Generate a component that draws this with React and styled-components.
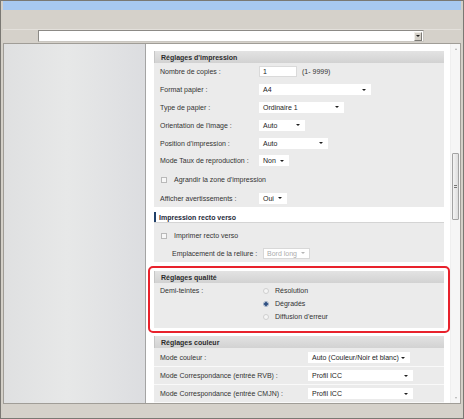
import React from "react";
import styled, { createGlobalStyle } from "styled-components";

const Global = createGlobalStyle`
  html, body { margin: 0; padding: 0; width: 464px; height: 419px; overflow: hidden; background: #d4d0c8; }
  body { font-family: "Liberation Sans", Arial, sans-serif; font-size: 7px; color: #2e2e2e; }
  * { box-sizing: border-box; }
`;

const Window = styled.div`
  width: 464px;
  height: 419px;
  display: flex;
  flex-direction: column;
  background: #d4d0c8;
  border: 1px solid #7a7873;
  padding: 0 2px;
`;

const TitleBar = styled.div`
  height: 9px;
  flex: none;
  background: #a7c8f0;
`;

const Toolbar = styled.div`
  height: 33px;
  flex: none;
  padding: 20px 37px 1px 35px;
  background: linear-gradient(to bottom, #d5d1ca 0 19px, #e3e0db 19px 20px, #d5d1ca 20px);
`;

const AddressBox = styled.div`
  height: 12px;
  background: #fff;
  border: 1px solid #8c8a86;
  border-right-color: #c9c6c0;
  border-bottom-color: #c9c6c0;
  display: flex;
  justify-content: flex-end;
  align-items: center;
  padding-right: 1px;
`;

const DropButton = styled.div`
  width: 8px;
  height: 9px;
  background: #d4d0c8;
  border: 1px solid #7c7a76;
  border-top-color: #f0eee9;
  border-left-color: #f0eee9;
  display: flex;
  align-items: center;
  justify-content: center;
`;

const Main = styled.div`
  height: 361px;
  flex: none;
  display: flex;
  border: 1px solid #a09d97;
`;

const LeftPanel = styled.div`
  width: 142px;
  flex: none;
  border-right: 1px solid #a4a4a4;
  background: linear-gradient(to right, #dfe0e1, #e7e8e8 45%, #dcdde0);
`;

const ContentArea = styled.div`
  flex: 1;
  display: flex;
  background: #fff;
  min-width: 0;
`;

const Scroll = styled.div`
  flex: 1;
  overflow: hidden;
  padding: 7px 6px 0 8px;
`;

const ScrollTrack = styled.div`
  width: 10px;
  flex: none;
  display: flex;
  flex-direction: column;
  align-items: center;
  background: #f6f6f6;
  border-left: 1px solid #efefef;
`;

const ArrowCell = styled.div`
  height: 10px;
  flex: none;
  display: flex;
  align-items: center;
  justify-content: center;
`;

const Tri = styled.span`
  width: 0;
  height: 0;
  border-left: 1.5px solid transparent;
  border-right: 1.5px solid transparent;
  ${p => (p.$up ? "border-bottom" : "border-top")}: 2px solid #b0b0b0;
`;

const Thumb = styled.div`
  width: 7px;
  height: 67px;
  margin-top: 99px;
  border: 1px solid #a3a3a3;
  border-radius: 1px;
  background: linear-gradient(to right, #f4f4f4, #dedede);
  display: flex;
  align-items: center;
  justify-content: center;
`;

const Grip = styled.span`
  width: 3px;
  height: 4px;
  background: repeating-linear-gradient(to bottom, #777 0 1px, #e8e8e8 1px 2px);
`;

const Spacer = styled.div`
  flex: 1;
`;

const BottomBar = styled.div`
  height: 14px;
  flex: none;
  background: #d5d1ca;
`;

const SectionHeader = styled.div`
  height: 12px;
  display: flex;
  align-items: center;
  padding-left: 6px;
  font-weight: bold;
  color: #2c2c2c;
  background: linear-gradient(to bottom, #e3e3e3, #d2d2d2);
  border-left: 1px solid #c6c6c6;
  margin-top: ${p => p.$mt || 0}px;
`;

const SectionBody = styled.div`
  background: #ebebeb;
  padding: ${p => p.$pad};
`;

const Row = styled.div`
  display: flex;
  align-items: center;
  height: ${p => p.$h || 17.8}px;
  padding-left: 6px;
  border-top: ${p => (p.$divided ? "1px solid #f9f9f9" : "none")};
`;

const Label = styled.span`
  width: ${p => p.$w}px;
  flex: none;
  padding-left: ${p => p.$indent || 0}px;
  white-space: nowrap;
  color: #333;
  align-self: ${p => (p.$top ? "flex-start" : "center")};
  line-height: ${p => (p.$top ? "13px" : "normal")};
`;

const TextInput = styled.div`
  width: ${p => p.$w}px;
  height: 11px;
  background: #fff;
  border: 1px solid #dadada;
  padding-left: 3px;
  display: flex;
  align-items: center;
  color: #222;
`;

const Hint = styled.span`
  margin-left: 5px;
  color: #333;
`;

const Select = styled.div`
  width: ${p => p.$w}px;
  height: 11px;
  display: flex;
  align-items: center;
  justify-content: space-between;
  padding: 0 4px 0 3px;
  background: #fff;
  border: 1px solid ${p => (p.$disabled ? "#d8d8d8" : "#fff")};
  color: ${p => (p.$disabled ? "#acacac" : "#222")};
  white-space: nowrap;
`;

const Caret = styled.span`
  width: 0;
  height: 0;
  border-left: 2px solid transparent;
  border-right: 2px solid transparent;
  border-top: 2.5px solid ${p => (p.$disabled ? "#b5b5b5" : "#1e1e1e")};
`;

const CheckLine = styled.label`
  display: flex;
  align-items: center;
  gap: 7px;
  padding-left: 1px;
  color: #333;
`;

const CheckBox = styled.span`
  width: 6px;
  height: 6px;
  border: 1px solid #b9b9b9;
  background: #f7f7f7;
`;

const SubHeader = styled.div`
  margin-top: 5px;
  height: 11px;
  border-bottom: 1px solid #d4d4d4;
  display: flex;
  align-items: stretch;
`;

const SubTitle = styled.span`
  border-left: 2px solid #203f69;
  padding-left: 3px;
  font-weight: bold;
  color: #1f2a3a;
  display: flex;
  align-items: center;
`;

const Highlight = styled.div`
  margin: 4px -6px 3px;
  border: 2px solid #e8222c;
  border-radius: 5px;
  padding: 3px 4px;
`;

const RadioGroup = styled.div`
  display: flex;
  flex-direction: column;
`;

const RadioLine = styled.div`
  height: 13px;
  display: flex;
  align-items: center;
  gap: 6px;
  color: #333;
`;

const Radio = styled.span`
  width: 6px;
  height: 6px;
  border-radius: 50%;
  border: 1px solid ${p => (p.$checked ? "#9aaac0" : "#cfcfcf")};
  background: ${p =>
    p.$checked
      ? "radial-gradient(circle, #2f5082 0 1.6px, #dfe5ee 2.1px)"
      : "#f5f5f5"};
`;

function Sel({ w, children, disabled }) {
  return (
    <Select $w={w} $disabled={disabled}>
      <span>{children}</span>
      <Caret $disabled={disabled} />
    </Select>
  );
}

export default function App() {
  return (
    <>
      <Global />
      <Window>
        <TitleBar />
        <Toolbar>
          <AddressBox>
            <DropButton>
              <Caret />
            </DropButton>
          </AddressBox>
        </Toolbar>
        <Main>
          <LeftPanel />
          <ContentArea>
            <Scroll>
              <SectionHeader>Réglages d'impression</SectionHeader>
              <SectionBody $pad="0">
                <Row>
                  <Label $w={99}>Nombre de copies :</Label>
                  <TextInput $w={38}>1</TextInput>
                  <Hint>(1- 9999)</Hint>
                </Row>
                <Row>
                  <Label $w={99}>Format papier :</Label>
                  <Sel w={112}>A4</Sel>
                </Row>
                <Row>
                  <Label $w={99}>Type de papier :</Label>
                  <Sel w={85}>Ordinaire 1</Sel>
                </Row>
                <Row>
                  <Label $w={99}>Orientation de l'image :</Label>
                  <Sel w={46}>Auto</Sel>
                </Row>
                <Row>
                  <Label $w={99}>Position d'impression :</Label>
                  <Sel w={69}>Auto</Sel>
                </Row>
                <Row>
                  <Label $w={99}>Mode Taux de reproduction :</Label>
                  <Sel w={30}>Non</Sel>
                </Row>
                <Row $h={19.5}>
                  <CheckLine>
                    <CheckBox />
                    Agrandir la zone d'impression
                  </CheckLine>
                </Row>
                <Row>
                  <Label $w={99}>Afficher avertissements :</Label>
                  <Sel w={28}>Oui</Sel>
                </Row>
              </SectionBody>

              <SubHeader>
                <SubTitle>Impression recto verso</SubTitle>
              </SubHeader>
              <SectionBody $pad="4px 0 0">
                <Row $h={17.5}>
                  <CheckLine>
                    <CheckBox />
                    Imprimer recto verso
                  </CheckLine>
                </Row>
                <Row $h={17.5}>
                  <Label $w={103} $indent={12}>Emplacement de la reliure :</Label>
                  <Sel w={47} disabled>Bord long</Sel>
                </Row>
              </SectionBody>

              <Highlight>
                <SectionHeader>Réglages qualité</SectionHeader>
                <SectionBody $pad="1px 0 5px">
                  <Row $h={39}>
                    <Label $w={103} $top>Demi-teintes :</Label>
                    <RadioGroup>
                      <RadioLine>
                        <Radio />
                        Résolution
                      </RadioLine>
                      <RadioLine>
                        <Radio $checked />
                        Dégradés
                      </RadioLine>
                      <RadioLine>
                        <Radio />
                        Diffusion d'erreur
                      </RadioLine>
                    </RadioGroup>
                  </Row>
                </SectionBody>
              </Highlight>

              <SectionHeader>Réglages couleur</SectionHeader>
              <SectionBody $pad="1px 0 0">
                <Row $h={17}>
                  <Label $w={148}>Mode couleur :</Label>
                  <Sel w={102}>Auto (Couleur/Noir et blanc)</Sel>
                </Row>
                <Row $h={18} $divided>
                  <Label $w={148}>Mode Correspondance (entrée RVB) :</Label>
                  <Sel w={105}>Profil ICC</Sel>
                </Row>
                <Row $h={18} $divided>
                  <Label $w={148}>Mode Correspondance (entrée CMJN) :</Label>
                  <Sel w={105}>Profil ICC</Sel>
                </Row>
                <Row $h={18} $divided />
              </SectionBody>
            </Scroll>
            <ScrollTrack>
              <ArrowCell>
                <Tri $up />
              </ArrowCell>
              <Thumb>
                <Grip />
              </Thumb>
              <Spacer />
              <ArrowCell>
                <Tri />
              </ArrowCell>
            </ScrollTrack>
          </ContentArea>
        </Main>
        <BottomBar />
      </Window>
    </>
  );
}
